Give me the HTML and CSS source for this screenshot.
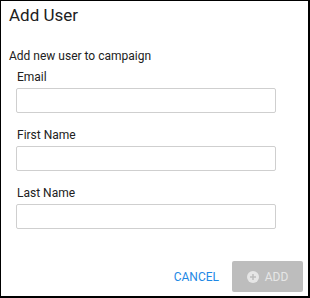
FILE: index.html
```html
<!DOCTYPE html>
<html lang="en">
<head>
    <meta charset="UTF-8">
    <meta name="viewport" content="width=device-width, initial-scale=1.0">
    <title>Add User</title>
    <link rel="stylesheet" href="styles.css">
</head>
<body>

    <div class="dialog">
        <h2 class="title">Add User</h2>
        <p class="subtitle">Add new user to campaign</p>

        <div class="fields">
            <label class="field">
                <span class="label">Email</span>
                <input type="text" class="input">
            </label>
            <label class="field">
                <span class="label">First Name</span>
                <input type="text" class="input">
            </label>
            <label class="field">
                <span class="label">Last Name</span>
                <input type="text" class="input">
            </label>
        </div>

        <div class="actions">
            <button class="btn-cancel">CANCEL</button>
            <button class="btn-add" disabled>
                <svg class="add-icon" width="12" height="12" viewBox="0 0 24 24">
                    <circle cx="12" cy="12" r="12" fill="#e6e6e6"/>
                    <path d="M12 6v12M6 12h12" stroke="#bdbdbd" stroke-width="3"/>
                </svg>
                ADD
            </button>
        </div>
    </div>

</body>
</html>
```

FILE: styles.css
```css
body {
    margin: 0;
    font-family: Roboto, "Liberation Sans", Arial, sans-serif;
    color: #212121;
}
.dialog {
    width: 307px;
    height: 295px;
    border-top: 1px solid #000;
    border-left: 1px solid #000;
    border-right: 2px solid #000;
    border-bottom: 2px solid #000;
    background: #fff;
    display: flex;
    flex-direction: column;
}
.title {
    margin: 0;
    padding: 4px 0 0 8px;
    font-size: 17px;
    font-weight: 400;
    line-height: 20px;
}
.subtitle {
    margin: 24px 0 0 8px;
    font-size: 12px;
    line-height: 14px;
}
.fields {
    display: flex;
    flex-direction: column;
    gap: 15px;
    padding: 7px 0 0 15px;
}
.field {
    display: flex;
    flex-direction: column;
    gap: 4px;
}
.label {
    font-size: 12px;
    line-height: 14px;
    padding-left: 1px;
}
.input {
    box-sizing: border-box;
    width: 260px;
    height: 25px;
    margin: 0;
    border: 1px solid #cfcfcf;
    border-radius: 2px;
    font: inherit;
}
.actions {
    margin-top: auto;
    display: flex;
    justify-content: flex-end;
    align-items: center;
    gap: 13px;
    padding: 0 5px 4px 0;
}
.btn-cancel {
    border: none;
    background: none;
    padding: 0;
    color: #1e88e5;
    font-family: inherit;
    font-size: 12px;
    cursor: pointer;
}
.btn-add {
    width: 71px;
    height: 31px;
    display: flex;
    align-items: center;
    justify-content: center;
    gap: 6px;
    border: none;
    border-radius: 2px;
    background: #bdbdbd;
    color: #e6e6e6;
    font-family: inherit;
    font-size: 12px;
}
```
